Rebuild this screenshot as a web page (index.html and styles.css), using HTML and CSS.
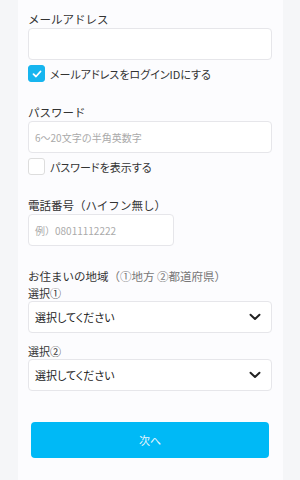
FILE: index.html
```html
<!DOCTYPE html>
<html lang="ja">

<head>
    <meta charset="UTF-8" />
    <meta name="viewport" content="width=device-width, initial-scale=1.0" />
    <title>会員登録</title>
    <link rel="stylesheet" href="styles.css">
</head>

<body>
    <main class="panel">
        <div class="field">
            <div class="label">メールアドレス</div>
            <div class="input"></div>
            <label class="check">
                <span class="box on">
                    <svg width="10" height="8" viewBox="0 0 10 8"><path d="M1.5 4.2 L4 6.5 L8.5 1.5" fill="none" stroke="#fff" stroke-width="1.8" stroke-linecap="round" stroke-linejoin="round"/></svg>
                </span>
                <span class="check_text">メールアドレスをログインIDにする</span>
            </label>
        </div>

        <div class="field">
            <div class="label">パスワード</div>
            <div class="input"><span class="ph">6〜20文字の半角英数字</span></div>
            <label class="check">
                <span class="box"></span>
                <span class="check_text">パスワードを表示する</span>
            </label>
        </div>

        <div class="field">
            <div class="label">電話番号（ハイフン無し）</div>
            <div class="input short"><span class="ph">例）08011112222</span></div>
        </div>

        <div class="field region">
            <div class="label">お住まいの地域<span class="note">（①地方 ②都道府県）</span></div>
            <div class="sub_label">選択①</div>
            <div class="select">
                <span>選択してください</span>
                <svg width="12" height="8" viewBox="0 0 12 8"><path d="M1.5 1.8 L6 6 L10.5 1.8" fill="none" stroke="#222" stroke-width="2" stroke-linecap="round" stroke-linejoin="round"/></svg>
            </div>
            <div class="sub_label">選択②</div>
            <div class="select">
                <span>選択してください</span>
                <svg width="12" height="8" viewBox="0 0 12 8"><path d="M1.5 1.8 L6 6 L10.5 1.8" fill="none" stroke="#222" stroke-width="2" stroke-linecap="round" stroke-linejoin="round"/></svg>
            </div>
        </div>

        <div class="btn">次へ</div>
    </main>
</body>

</html>
```

FILE: styles.css
```css
html,
body {
    margin: 0;
    padding: 0;
    background: #f5f6f8;
    font-family: "Noto Sans CJK JP", "Noto Sans", sans-serif;
    color: #333;
}

.panel {
    margin: 0 17px 0 18px;
    min-height: 480px;
    box-sizing: border-box;
    background: #fcfcfe;
    padding: 10px 11px 20px 10px;
}

.field {
    margin-bottom: 21px;
}

.label {
    font-size: 11.5px;
    line-height: 18px;
}

.label .note {
    color: #777;
}

.input,
.select {
    height: 32px;
    box-sizing: border-box;
    border: 1px solid #e6e6ea;
    border-radius: 4px;
    background: #fff;
    display: flex;
    align-items: center;
    padding: 0 6px;
    font-size: 11px;
}

.input.short {
    width: 146px;
}

.ph {
    color: #aaa;
    font-size: 10px;
}

.check {
    display: flex;
    align-items: center;
    gap: 5px;
    margin-top: 5px;
    font-size: 11px;
    font-feature-settings: "palt";
}

.box {
    width: 17px;
    height: 17px;
    box-sizing: border-box;
    border: 1px solid #ddd;
    border-radius: 3px;
    background: #fff;
    display: flex;
    align-items: center;
    justify-content: center;
}

.box.on {
    background: #16b5ef;
    border-color: #16b5ef;
}

.sub_label {
    font-size: 11px;
    line-height: 16px;
    font-feature-settings: "palt";
}

.select {
    justify-content: space-between;
    padding: 0 10px 0 6px;
    color: #222;
    margin-bottom: 10px;
    font-feature-settings: "palt";
}

.btn {
    margin: 31px 3px 0 3px;
    height: 36px;
    border-radius: 4px;
    background: #00b9f6;
    color: #e8f6fd;
    font-size: 11px;
    display: flex;
    align-items: center;
    justify-content: center;
}
```
